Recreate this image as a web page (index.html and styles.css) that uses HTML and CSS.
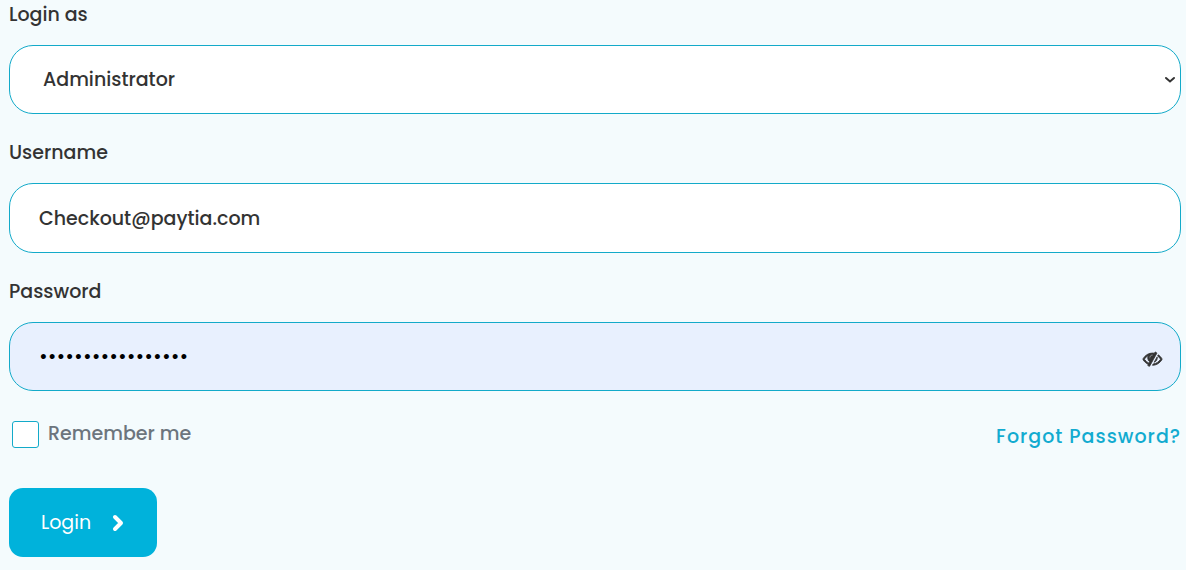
FILE: index.html
```html
<!DOCTYPE html>
<html lang="en">
<head>
<meta charset="UTF-8">
<meta name="viewport" content="width=device-width, initial-scale=1.0">
<title>Login</title>

<link rel="stylesheet" href="styles.css">
</head>

<body>

<form class="login-form">

<div class="field">
<label for="loginAs">Login as</label>
<div class="control">
<select id="loginAs">
<option>Administrator</option>
<option>Agent</option>
</select>
<svg class="chevron" viewBox="0 0 12 8"><path d="M2 2 6 5.500 10 2"/></svg>
</div>
</div>

<div class="field">
<label for="username">Username</label>
<input type="text" id="username" value="Checkout@paytia.com">
</div>

<div class="field">
<label for="password">Password</label>
<div class="control">
<input type="password" id="password" class="autofilled" value="12345678901234567">
<button type="button" class="eye-btn" aria-label="Show password" onclick="togglePassword()">
<svg viewBox="0 0 1792 1792"><path d="M555 1335l78-141q-87-63-136-159t-49-203q0-121 61-225-229 117-381 353 167 258 427 375zm389-759q0-20-14-34t-34-14q-125 0-214.500 89.500t-89.500 214.500q0 20 14 34t34 14 34-14 14-34q0-86 61-147t147-61q20 0 34-14t14-34zm363-191q0 7-1 9-106 189-316 567t-315 566l-49 89q-10 16-28 16-12 0-134-70-16-10-16-28 0-12 44-87-143-65-263.500-173t-208.500-245q-20-31-20-69t20-69q153-235 380-371t496-136q89 0 180 17l54-97q10-16 28-16 5 0 18 6t31 15.500 33 18.500 31.500 18.500 19.500 11.500q16 10 16 27zm37 447q0 139-79 253.500t-209 164.500l280-502q8 45 8 84zm448 128q0 35-20 69-39 64-109 145-150 172-347.500 267t-419.500 95l74-132q212-18 392.500-137t301.500-307q-115-179-282-294l63-112q95 64 182.500 153t144.500 184q20 34 20 69z"/></svg>
</button>
</div>
</div>

<div class="options">
<div class="remember">
<input type="checkbox" id="remember">
<label for="remember">Remember me</label>
</div>
<a href="#" class="forgot">Forgot Password?</a>
</div>

<button type="submit" class="login-btn">
Login
<svg viewBox="0 0 14 18"><path d="M4 3 10 9 4 15"/></svg>
</button>

</form>

<script>
function togglePassword(){
const input=document.getElementById("password");
input.type=input.type==="password"?"text":"password";
}
</script>

</body>
</html>
```
FILE: styles.css
```css
*{
box-sizing:border-box;
}

body{
margin:0;
background:#f4fbfd;
color:#333;
font-family:Poppins, Inter, sans-serif;
font-size:19px;
font-weight:500;
line-height:30px;
}

.login-form{
padding:0 5px 0 9px;
}

.field{
margin-bottom:24px;
}

.field label{
display:block;
margin-bottom:15px;
}

.field input,
.field select{
display:block;
width:100%;
height:69px;
padding:0 29px;
border:1px solid #13aac9;
border-radius:24px;
background:white;
color:#333;
font:inherit;
outline:none;
appearance:none;
}

.field input[type="text"]{
height:70px;
}

.control{
position:relative;
}

.field .control select{
padding-left:33px;
}

.chevron{
position:absolute;
top:31px;
right:5px;
width:12px;
height:8px;
fill:none;
stroke:#333;
stroke-width:2;
stroke-linecap:round;
pointer-events:none;
}

.field .autofilled{
background:#e8f0fe;
color:black;
}

.eye-btn{
position:absolute;
top:27px;
right:19px;
width:19px;
height:19px;
padding:0;
border:none;
background:none;
cursor:pointer;
}

.eye-btn svg{
display:block;
overflow:visible;
fill:#333;
stroke:#333;
stroke-width:80;
}

.options{
display:flex;
justify-content:space-between;
align-items:flex-start;
margin-top:28px;
}

.remember{
display:flex;
align-items:center;
gap:9px;
padding-left:3px;
color:#6c757d;
}

.remember input{
width:27px;
height:27px;
margin:0;
border:1px solid #13aac9;
border-radius:3px;
background:white;
appearance:none;
}

.remember input:checked{
background:#00b2db;
}

.forgot{
padding-top:3px;
color:#12abd0;
letter-spacing:1px;
text-decoration:none;
}

.login-btn{
display:flex;
align-items:center;
gap:20px;
height:69px;
margin-top:36px;
padding:0 32px;
border:none;
border-radius:14px;
background:#00b2db;
color:white;
font:inherit;
font-weight:400;
cursor:pointer;
}

.login-btn svg{
width:14px;
height:18px;
fill:none;
stroke:white;
stroke-width:4;
stroke-linecap:round;
stroke-linejoin:round;
}
```
